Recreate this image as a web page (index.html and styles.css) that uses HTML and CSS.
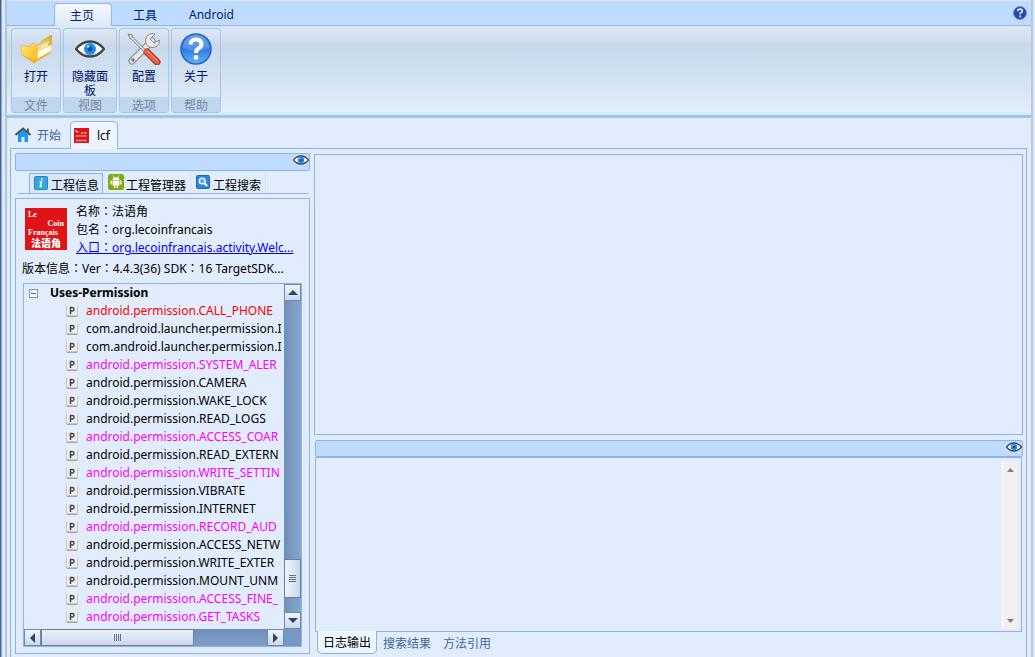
FILE: index.html
```html
<!DOCTYPE html>
<html lang="zh-CN">
<head>
<meta charset="utf-8">
<title>lcf</title>
<link rel="stylesheet" href="styles.css">
</head>
<body>
<svg class="defs" aria-hidden="true">
  <defs>
    <linearGradient id="gold" x1="0" y1="0" x2="1" y2="1"><stop offset="0" stop-color="#ffe680"/><stop offset="1" stop-color="#fdb813"/></linearGradient>
    <linearGradient id="goldback" x1="0" y1="1" x2="1" y2="0"><stop offset="0" stop-color="#fff6c8"/><stop offset="1" stop-color="#d9a928"/></linearGradient>
    <linearGradient id="blueball" x1="0" y1="0" x2="0" y2="1"><stop offset="0" stop-color="#4b93ec"/><stop offset=".5" stop-color="#2f7be0"/><stop offset="1" stop-color="#5fb2fa"/></linearGradient>
    <symbol id="eye" viewBox="0 0 30 18">
      <path d="M1 9Q7 1.500 15 1.500T29 9Q23 16.500 15 16.500T1 9Z" fill="#fff" stroke="#444" stroke-width="2.400"/>
      <circle cx="15" cy="9" r="6" fill="#1a8fee"/><circle cx="15" cy="9" r="2.500" fill="#124a88"/><circle cx="13" cy="6.500" r="1.200" fill="#bfe4ff"/>
    </symbol>
    <symbol id="perm" viewBox="0 0 12 12">
      <rect x="0" y="0" width="12" height="12" rx="2" fill="#c8c8c8"/><rect x="1" y="0" width="10" height="10" rx="1" fill="#efefef"/>
      <path d="M1 11.500H11" fill="none" stroke="#a4a4a4"/>
      <path d="M4.500 9V2.500H6.500Q8 2.500 8 4.200T6.500 6H4.500" fill="none" stroke="#4a4a4a" stroke-width="1.500"/>
    </symbol>
  </defs>
</svg>
<div class="app">
  <header class="menu">
    <nav class="menu-tabs">
      <button class="menu-tab active">主页</button>
      <button class="menu-tab">工具</button>
      <button class="menu-tab latin">Android</button>
    </nav>
    <button class="help" aria-label="帮助">
      <svg width="14" height="14" viewBox="0 0 14 14"><circle cx="7" cy="7" r="6.500" fill="#2447a8" stroke="#8294b8"/><path d="M4.700 5.300Q4.700 3.200 7 3.200T9.300 5.200Q9.300 6.400 7.200 7.200V8.300" fill="none" stroke="#e6e9f2" stroke-width="1.700"/><rect x="6.300" y="9.500" width="1.800" height="1.800" fill="#e6e9f2"/></svg>
    </button>
  </header>
  <section class="ribbon">
    <div class="group">
      <button class="tool"><svg width="32" height="32" viewBox="0 0 32 32"><path d="M16 13L21 10L22 8L31.500 2V15L16 24Z" fill="url(#goldback)" stroke="#d3a53a" stroke-width=".8"/><path d="M22 12L29 8L27 14L20 20Z" fill="#fbe8a0"/><path d="M16 19L31.500 12V19L16 29Z" fill="#fffdf0" stroke="#ead187" stroke-width=".6"/><path d="M1 14Q3 11 6 13L9 14L13 10L17.500 13L17 28L14 30L2 22Z" fill="url(#gold)" stroke="#f3b51b" stroke-width=".7"/><path d="M2 22L14 30L31 20V18L15 27Z" fill="#eeb02a"/></svg><span>打开</span></button>
      <div class="group-name">文件</div>
    </div>
    <div class="group wide">
      <button class="tool"><svg width="32" height="32" viewBox="0 0 32 32"><use href="#eye" x="1" y="7" width="30" height="18"/></svg><span>隐藏面板</span></button>
      <div class="group-name">视图</div>
    </div>
    <div class="group">
      <button class="tool"><svg width="34" height="32" viewBox="0 0 34 32"><path d="M5 28L25 8" stroke="#808488" stroke-width="7" stroke-linecap="round"/><path d="M5 28L25 8" stroke="#e7e9ea" stroke-width="5" stroke-linecap="round"/><path d="M28 1A7 7 0 1 0 32.500 7L27 10L23 6Z" fill="#e9ebec" stroke="#888b90"/><circle cx="6" cy="27" r="1.800" fill="#777"/><path d="M3 3L17 17" stroke="#74787c" stroke-width="3"/><path d="M1 1L5 2L6 6L3 5Z" fill="#eee" stroke="#777"/><path d="M4 4L17 17" stroke="#eee" stroke-width="1.400"/><path d="M20 19L30 29" stroke="#a93421" stroke-width="7" stroke-linecap="round"/><path d="M19.500 18.500L30 29" stroke="#e66045" stroke-width="5" stroke-linecap="round"/><path d="M20 18L31 28" stroke="#ff9f83" stroke-width="1"/></svg><span>配置</span></button>
      <div class="group-name">选项</div>
    </div>
    <div class="group">
      <button class="tool"><svg width="32" height="32" viewBox="0 0 32 32"><circle cx="16" cy="16" r="15" fill="url(#blueball)" stroke="#2365c4" stroke-width="1.500"/><path d="M3 15A13 13 0 0 1 29 15Q16 20 3 15Z" fill="#fff" opacity=".18"/><path d="M10.500 11.500Q11 6.500 16 6.500T21.500 11Q21.500 14 18.500 15.500Q16 17 16 20" fill="none" stroke="#fff" stroke-width="4"/><circle cx="16" cy="24.500" r="2.400" fill="#fff"/></svg><span>关于</span></button>
      <div class="group-name">帮助</div>
    </div>
  </section>
  <nav class="doc-tabs">
    <button class="doc-tab"><svg width="16" height="16" viewBox="0 0 16 16"><path d="M3 7L8 2.500L13 7V15H9.500V10H6.500V15H3Z" fill="#189af5"/><path d="M.5 8L8 1.500L15.500 8" fill="none" stroke="#4a5056" stroke-width="2"/><path d="M12 1.500H14V5L12 4Z" fill="#555"/></svg><span>开始</span></button>
    <button class="doc-tab active"><svg width="15" height="15" viewBox="0 0 15 15"><rect width="15" height="15" fill="#e01416"/><path d="M2 2V4H5M7 5H13M2 8H13M2 12.500H13" stroke="#f6b3b3" stroke-width="1.500" stroke-dasharray="2 .7" fill="none"/></svg><span class="latin">lcf</span></button>
  </nav>
  <main class="workspace">
    <aside class="side">
      <div class="bar"><button class="eye-button" aria-label="隐藏面板"><svg width="16" height="10"><use href="#eye" width="16" height="10"/></svg></button></div>
      <nav class="side-tabs">
        <button class="side-tab active"><svg width="14" height="14" viewBox="0 0 14 14"><rect x=".5" y=".5" width="13" height="13" rx="1" fill="#35a8e4" stroke="#1e86c4"/><path d="M8 2.500L7.700 4M5.500 5.800H7.300L6.300 10.500H8" fill="none" stroke="#fff" stroke-width="1.500"/></svg><span>工程信息</span></button>
        <button class="side-tab"><svg width="16" height="16" viewBox="0 0 16 16"><rect width="16" height="16" rx="2.500" fill="#7fac10"/><path d="M4.500 6A3.500 3 0 0 1 11.500 6ZM4.500 6.500H11.500V11.500H10V14H8.700V11.500H7.300V14H6V11.500H4.500ZM2.500 6.500H3.800V10.500H2.500ZM12.200 6.500H13.500V10.500H12.200Z" fill="#fff"/><path d="M5 1.500L6 3.500M11 1.500L10 3.500" stroke="#fff" stroke-width=".7"/></svg><span>工程管理器</span></button>
        <button class="side-tab search"><svg width="14" height="14" viewBox="0 0 14 14"><rect x=".5" y=".5" width="13" height="13" rx="1" fill="#2e84e0" stroke="#1d66b8"/><circle cx="6.200" cy="6" r="2.900" fill="#5ca7ef" stroke="#fff" stroke-width="1.400"/><path d="M8.300 8.200L11.200 11" stroke="#fff" stroke-width="2"/></svg><span>工程搜索</span></button>
      </nav>
      <section class="info">
        <div class="summary">
          <div class="logo"><b>Le</b><b class="right">Coin</b><b>Français</b><b class="cn">法语角</b></div>
          <div class="facts">
            <div>名称<span class="colon" lang="zh-TW">：</span>法语角</div>
            <div>包名<span class="colon" lang="zh-TW">：</span><span class="latin">org.lecoinfrancais</span></div>
            <a href="#">入口<span class="colon" lang="zh-TW">：</span><span class="latin">org.lecoinfrancais.activity.Welc...</span></a>
          </div>
        </div>
        <div class="version">版本信息<span class="colon" lang="zh-TW">：</span><span class="latin">Ver</span><span class="colon" lang="zh-TW">：</span><span class="latin">4.4.3(36) SDK</span><span class="colon" lang="zh-TW">：</span><span class="latin">16 TargetSDK...</span></div>
        <div class="tree">
          <div class="tree-view">
            <div class="root"><button class="toggle" aria-label="折叠"></button><strong>Uses-Permission</strong></div>
            <ul class="perms">
              <li class="red"><svg><use href="#perm"/></svg>android.permission.CALL_PHONE</li>
              <li><svg><use href="#perm"/></svg>com.android.launcher.permission.I</li>
              <li><svg><use href="#perm"/></svg>com.android.launcher.permission.I</li>
              <li class="pink"><svg><use href="#perm"/></svg>android.permission.SYSTEM_ALER</li>
              <li><svg><use href="#perm"/></svg>android.permission.CAMERA</li>
              <li><svg><use href="#perm"/></svg>android.permission.WAKE_LOCK</li>
              <li><svg><use href="#perm"/></svg>android.permission.READ_LOGS</li>
              <li class="pink"><svg><use href="#perm"/></svg>android.permission.ACCESS_COAR</li>
              <li><svg><use href="#perm"/></svg>android.permission.READ_EXTERN</li>
              <li class="pink"><svg><use href="#perm"/></svg>android.permission.WRITE_SETTIN</li>
              <li><svg><use href="#perm"/></svg>android.permission.VIBRATE</li>
              <li><svg><use href="#perm"/></svg>android.permission.INTERNET</li>
              <li class="pink"><svg><use href="#perm"/></svg>android.permission.RECORD_AUD</li>
              <li><svg><use href="#perm"/></svg>android.permission.ACCESS_NETW</li>
              <li><svg><use href="#perm"/></svg>android.permission.WRITE_EXTER</li>
              <li><svg><use href="#perm"/></svg>android.permission.MOUNT_UNM</li>
              <li class="pink"><svg><use href="#perm"/></svg>android.permission.ACCESS_FINE_</li>
              <li class="pink"><svg><use href="#perm"/></svg>android.permission.GET_TASKS</li>
            </ul>
          </div>
          <div class="vscroll">
            <button class="sb" aria-label="向上"><svg width="10" height="5"><path d="M0 5L5 0L10 5Z"/></svg></button>
            <div class="before"></div>
            <div class="thumb"><i class="grip"></i></div>
            <div class="after"></div>
            <button class="sb" aria-label="向下"><svg width="10" height="5"><path d="M0 0L5 5L10 0Z"/></svg></button>
          </div>
          <div class="hscroll">
            <button class="sb" aria-label="向左"><svg width="5" height="10"><path d="M5 0L0 5L5 10Z"/></svg></button>
            <div class="thumb"><i class="grip"></i></div>
            <button class="sb end" aria-label="向右"><svg width="5" height="10"><path d="M0 0L5 5L0 10Z"/></svg></button>
          </div>
          <div class="corner"></div>
        </div>
      </section>
    </aside>
    <section class="content">
      <div class="editor"></div>
      <div class="bar"><button class="eye-button" aria-label="隐藏面板"><svg width="16" height="10"><use href="#eye" width="16" height="10"/></svg></button></div>
      <div class="log">
        <textarea class="log-text" aria-label="日志输出"></textarea>
        <div class="log-scroll">
          <svg width="7" height="4"><path d="M0 4L3.500 0L7 4Z"/></svg>
          <svg width="7" height="4"><path d="M0 0L3.500 4L7 0Z"/></svg>
        </div>
      </div>
      <nav class="log-tabs">
        <button class="log-tab active">日志输出</button>
        <button class="log-tab">搜索结果</button>
        <button class="log-tab">方法引用</button>
      </nav>
    </section>
  </main>
</div>
</body>
</html>
```
FILE: styles.css
```css
* { box-sizing: border-box; }

body {
  margin: 0;
  font: 12px/18px "Noto Sans CJK SC", sans-serif;
  color: #000;
  background: #dce6f6;
}

button {
  margin: 0;
  padding: 0;
  border: 0;
  background: none;
  font: inherit;
  color: inherit;
}

svg { display: block; flex: none; }
.defs { position: absolute; width: 0; height: 0; }
.latin { font-family: "Noto Sans", sans-serif; font-size: 12px; line-height: 14px; }
.colon { font-family: "Noto Sans CJK TC", sans-serif; }

.app {
  display: flex;
  flex-direction: column;
  height: 100vh;
  margin-right: 2px;
  border-right: 2px solid #b9c8dd;
  border-left: 1px solid #3f66a4;
  padding-left: 6px;
  background: linear-gradient(90deg, #8ba6cf 1px, #dfe7f3 1px, #dfe7f3 4px, #b4c4d9 4px, #b4c4d9 6px, #e1edfc 6px);
}

.menu {
  display: flex;
  justify-content: space-between;
  height: 26px;
  border-top: 1px solid #dce8fa;
  border-bottom: 1px solid #94b6e6;
  background: #bfdbff;
}

.menu-tabs { display: flex; padding: 2px 0 0 47px; height: 25px; }
.menu-tab { padding: 0 17px; color: #001a72; }
.menu-tab.latin { padding: 0 15px; }
.menu-tab.active {
  width: 58px;
  margin-right: 4px;
  border: 1px solid #94b6e6;
  border-bottom: 0;
  border-radius: 4px 4px 0 0;
  background: linear-gradient(#f4f9ff, #dde9f7);
  padding: 0 2px 0 0;
}
.help { margin-right: 4px; }

.ribbon {
  display: flex;
  gap: 2px;
  height: 92px;
  padding: 2px 4px 2px;
  border-bottom: 3px solid #a5c2ea;
  background: linear-gradient(#dde8f5, #cfdcec 17px, #c8d9ec 18px, #d0e1f1 50px, #e3effd 85px, #c2f0ff);
}

.group {
  display: flex;
  flex-direction: column;
  width: 50px;
  height: 85px;
  border: 1px solid #aac5e3;
  border-radius: 3px;
  background: linear-gradient(#dde8f5, #cbdaec 16px, #c8d9ec 17px, #dce9f7 68px);
  overflow: hidden;
}
.group.wide { width: 54px; }
.tool {
  display: flex;
  flex: 1;
  flex-direction: column;
  align-items: center;
  padding: 4px 4px 0;
  color: #001068;
  line-height: 14px;
}
.tool span { margin-top: 4px; }
.group-name {
  flex: none;
  height: 15px;
  line-height: 15px;
  text-align: center;
  color: #7486a0;
  background: #c1d7f0;
}

.doc-tabs {
  display: flex;
  height: 30px;
  padding: 3px 0 0 3px;
}
.doc-tab {
  display: flex;
  align-items: center;
  gap: 6px;
  width: 60px;
  padding: 0 5px;
  color: #3f649b;
}
.doc-tab.active {
  position: relative;
  gap: 8px;
  width: 48px;
  height: 28px;
  padding: 0 3px;
  border: 1px solid #8db2e3;
  border-bottom: 0;
  border-radius: 5px 5px 0 0;
  background: #edf5ff;
  color: #000;
}

.workspace {
  display: flex;
  flex: 1;
  gap: 4px;
  min-height: 0;
  margin: 0 4px 0 3px;
  padding: 4px 3px 3px 4px;
  border: 1px solid #8db2e3;
  border-bottom: 0;
}

.bar {
  display: flex;
  justify-content: flex-end;
  height: 18px;
  border: 1px solid #8db2e3;
  border-radius: 2px;
  background: #bfdbff;
}
.eye-button { height: 12px; }

.side { display: flex; flex-direction: column; width: 295px; flex: none; }

.side-tabs {
  display: flex;
  height: 21px;
  margin: 2px 2px 4px 3px;
  padding-left: 11px;
  border-bottom: 1px solid #8db2e3;
}
.side-tab {
  display: flex;
  align-items: center;
  gap: 2px;
  padding: 0 4px 0 5px;
  border-right: 1px solid #d1e2f6;
}
.side-tab svg { margin-bottom: 2px; }
.side-tab span { padding-top: 3px; }
.side-tab.search { gap: 3px; }
.side-tab.active {
  gap: 3px;
  padding: 0 3px 0 4px;
  border: 1px solid #8db2e3;
  border-bottom: 0;
  background: #d8e7fa;
}

.info {
  display: flex;
  flex: 1;
  flex-direction: column;
  min-height: 0;
  padding: 3px 7px 6px;
  border: 1px solid #8db2e3;
}
.summary { display: flex; gap: 9px; padding-left: 2px; }
.logo {
  display: flex;
  flex-direction: column;
  width: 42px;
  height: 42px;
  margin-top: 6px;
  padding: 2px 3px;
  background: #e01416;
  color: #fff;
  font: 8px/9px "Liberation Serif", serif;
}
.logo .right { text-align: right; }
.logo .cn { font: 900 10px/11px "Noto Sans CJK SC", sans-serif; text-align: center; }
.facts { white-space: nowrap; }
.facts div, .facts a { display: block; height: 18px; }
.facts a { color: #00f; }
.version { height: 18px; margin: 3px 0 6px -1px; white-space: nowrap; }

.tree {
  display: grid;
  grid-template: minmax(0, 1fr) 17px / minmax(0, 1fr) 17px;
  flex: 1;
  min-height: 0;
  border: 1px solid #8db2e3;
  font-family: "Noto Sans", sans-serif;
}
.tree-view { overflow: hidden; }
.root { display: flex; align-items: center; gap: 12px; height: 18px; padding-left: 5px; }
.toggle {
  width: 9px;
  height: 9px;
  border: 1px solid #8a97ab;
  background: linear-gradient(#4b639a, #4b639a) center / 5px 1px no-repeat #f5f8fc;
}
.perms { margin: 0; padding: 0; list-style: none; }
.perms li {
  display: flex;
  align-items: center;
  gap: 8px;
  height: 18px;
  padding-left: 42px;
  white-space: nowrap;
}
.perms svg { width: 12px; height: 12px; }
.red { color: #f00; }
.pink { color: #f0f; }

.vscroll { display: flex; flex-direction: column; background: linear-gradient(90deg, #6f8fba, #87a6cf); }
.hscroll { display: flex; background: linear-gradient(#6f8fba, #7f9fc9); }
.corner { background: #7798c5; }
.before { flex: 258; }
.after { flex: 14; }
.sb {
  display: grid;
  place-items: center;
  flex: none;
  width: 17px;
  height: 17px;
  border: 1px solid #6f88b5;
  background: linear-gradient(#f1f5fb, #cbd8ec);
  fill: #354269;
}
.end { margin-left: auto; }
.thumb {
  display: grid;
  place-items: center;
  border: 1px solid #687ca5;
  background: linear-gradient(90deg, #f0f4fb, #ccd9ec);
}
.vscroll .thumb { flex: 0 0 39px; }
.hscroll .thumb { width: 59%; background: linear-gradient(#edf2fa, #cbd7e9); }
.grip { width: 7px; height: 7px; background: repeating-linear-gradient(#617196 0 1px, transparent 1px 2px); }
.hscroll .grip { background: repeating-linear-gradient(90deg, #617196 0 1px, transparent 1px 2px); }

.content { display: flex; flex: 1; flex-direction: column; min-width: 0; }
.editor { flex: 279; margin-top: 1px; border: 1px solid #8db2e3; }
.content .bar { flex: none; margin: 5px 0 0 1px; }
.log {
  display: flex;
  flex: 168;
  min-height: 0;
  margin: 0 1px;
  padding: 3px 3px 2px 1px;
  border: 1px solid #8db2e3;
}
.log-text { flex: 1; min-height: 0; border: 0; padding: 4px; background: #e1edfc; resize: none; outline: 0; }
.log-scroll {
  display: flex;
  flex-direction: column;
  justify-content: space-between;
  align-items: center;
  width: 16px;
  padding: 7px 0 6px;
  border-left: 1px solid #fff;
  background: #f0f0f0;
  fill: #808080;
}
.content .bar { height: 17px; }
.log-tabs { display: flex; flex: none; height: 23px; margin-top: -1px; padding-left: 3px; }
.log-tab { width: 60px; color: #3f649b; }
.log-tab.active {
  border: 1px solid #8db2e3;
  border-top: 0;
  border-radius: 0 0 5px 5px;
  background: #edf5ff;
  color: #000;
}
```
